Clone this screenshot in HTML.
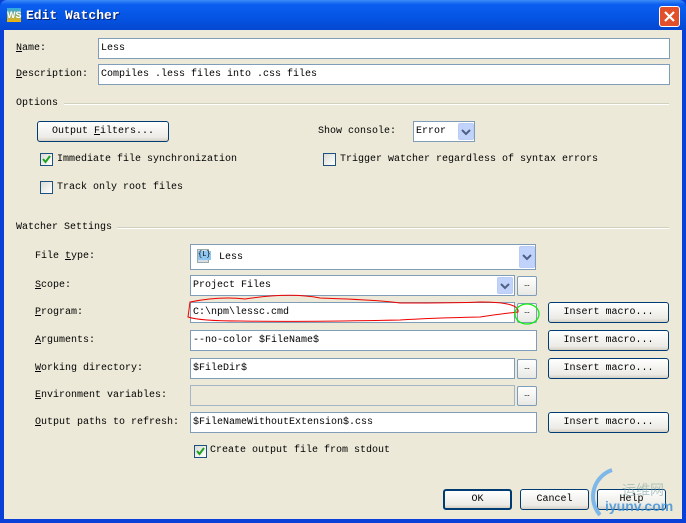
<!DOCTYPE html>
<html><head><meta charset="utf-8"><style>
*{box-sizing:border-box;margin:0;padding:0}
body{width:686px;height:523px;overflow:hidden;background:#0a3fd8;font-family:"Liberation Mono",monospace;font-size:10px;color:#000;position:relative}
.tb{position:absolute;left:0;top:0;width:686px;height:30px;background:linear-gradient(#3d8cf7 0%,#0a5ef0 15%,#0554e3 60%,#0548d0 100%);border-radius:7px 7px 0 0}
.frame{position:absolute;left:4px;top:30px;width:678px;height:489px;background:#ece9d8}
.a{position:absolute;white-space:nowrap}
.inp{position:absolute;background:#fff;border:1px solid #7f9db9;height:21px;padding:0 0 0 2px;line-height:20px}
.btn{position:absolute;border:1px solid #003c74;border-radius:3px;background:linear-gradient(#fff,#ecebe6 80%,#d6d0c5);text-align:center;line-height:19px;height:21px}
.dots{position:absolute;width:20px;height:20px;border:1px solid #7f9db9;border-radius:2px;background:linear-gradient(#fff,#e8e8e4);text-align:center;font-size:9px;line-height:14px}
.dd{position:absolute;width:16px;background:#c1d3fb;border:1px solid #b9cdf7;border-radius:2px}
.cb{position:absolute;width:13px;height:13px;border:1px solid #1c5180;background:linear-gradient(135deg,#dcdcd5,#fff)}
.line{position:absolute;height:2px;border-top:1px solid #d0d0bf;border-bottom:1px solid #fff}
u{text-decoration:underline}
</style></head><body>
<div class="tb"></div>
<div class="a" style="left:7px;top:8px;width:14px;height:14px;background:linear-gradient(#2aa8e8,#f5b400);font:bold 9px 'Liberation Sans';color:#fff;line-height:14px;text-align:center">WS</div>
<div class="a" style="left:26px;top:8px;color:#fff;font-weight:bold;font-size:13px;text-shadow:1px 1px #0a1f6a">Edit Watcher</div>
<div class="a" style="left:659px;top:6px;width:21px;height:21px;background:#e1502a;border:1px solid #fff;border-radius:3px"><svg width="19" height="19"><path d="M5 5L14 14M14 5L5 14" stroke="#fff" stroke-width="2.2"/></svg></div>
<div class="frame"></div>

<div class="a" style="left:16px;top:43px"><u>N</u>ame:</div>
<div class="inp" style="left:98px;top:38px;width:572px">Less</div>
<div class="a" style="left:16px;top:69px"><u>D</u>escription:</div>
<div class="inp" style="left:98px;top:64px;width:572px">Compiles .less files into .css files</div>

<div class="a" style="left:16px;top:98px">Options</div>
<div class="line" style="left:64px;top:103px;width:605px"></div>
<div class="btn" style="left:37px;top:121px;width:132px">Output <u>F</u>ilters...</div>
<div class="a" style="left:318px;top:126px">Show console:</div>
<div class="inp" style="left:413px;top:121px;width:62px">Error</div>
<div class="dd" style="left:458px;top:123px;height:17px"><svg width="14" height="15"><path d="M3 6L7 10L11 6" stroke="#4d6185" stroke-width="2" fill="none"/></svg></div>

<div class="cb" style="left:40px;top:153px"><svg width="11" height="11"><path d="M2 5L4.5 8L9 2" stroke="#21a121" stroke-width="2" fill="none"/></svg></div>
<div class="a" style="left:57px;top:154px">Immediate file synchronization</div>
<div class="cb" style="left:323px;top:153px"></div>
<div class="a" style="left:340px;top:154px">Trigger watcher regardless of syntax errors</div>
<div class="cb" style="left:40px;top:181px"></div>
<div class="a" style="left:57px;top:182px">Track only root files</div>

<div class="a" style="left:16px;top:222px">Watcher Settings</div>
<div class="line" style="left:117px;top:227px;width:552px"></div>

<div class="a" style="left:35px;top:251px">File <u>t</u>ype:</div>
<div class="inp" style="left:190px;top:244px;width:346px;height:26px;line-height:25px;padding-left:28px">Less</div>
<div class="a" style="left:197px;top:249px;width:12px;height:14px;background:#d6dde6;border:1px solid #9aa"></div>
<div class="a" style="left:198px;top:251px;font-size:7px;background:#8fc7f0;line-height:9px">{L}</div>
<div class="dd" style="left:519px;top:246px;height:22px"><svg width="14" height="20"><path d="M3 8L7 12L11 8" stroke="#4d6185" stroke-width="2" fill="none"/></svg></div>

<div class="a" style="left:35px;top:280px"><u>S</u>cope:</div>
<div class="inp" style="left:190px;top:275px;width:325px">Project Files</div>
<div class="dd" style="left:497px;top:277px;height:17px"><svg width="14" height="15"><path d="M3 6L7 10L11 6" stroke="#4d6185" stroke-width="2" fill="none"/></svg></div>
<div class="dots" style="left:517px;top:276px">…</div>

<div class="a" style="left:35px;top:307px"><u>P</u>rogram:</div>
<div class="inp" style="left:190px;top:302px;width:325px">C:\npm\lessc.cmd</div>
<div class="dots" style="left:517px;top:303px">…</div>
<div class="btn" style="left:548px;top:302px;width:121px">Insert macro...</div>

<div class="a" style="left:35px;top:335px"><u>A</u>rguments:</div>
<div class="inp" style="left:190px;top:330px;width:347px">--no-color $FileName$</div>
<div class="btn" style="left:548px;top:330px;width:121px">Insert macro...</div>

<div class="a" style="left:35px;top:363px"><u>W</u>orking directory:</div>
<div class="inp" style="left:190px;top:358px;width:325px">$FileDir$</div>
<div class="dots" style="left:517px;top:359px">…</div>
<div class="btn" style="left:548px;top:358px;width:121px">Insert macro...</div>

<div class="a" style="left:35px;top:390px"><u>E</u>nvironment variables:</div>
<div class="inp" style="left:190px;top:385px;width:325px;background:#ece9d8;border-color:#a5b5c8"></div>
<div class="dots" style="left:517px;top:386px">…</div>

<div class="a" style="left:35px;top:417px"><u>O</u>utput paths to refresh:</div>
<div class="inp" style="left:190px;top:412px;width:347px">$FileNameWithoutExtension$.css</div>
<div class="btn" style="left:548px;top:412px;width:121px">Insert macro...</div>

<div class="cb" style="left:194px;top:445px"><svg width="11" height="11"><path d="M2 5L4.5 8L9 2" stroke="#21a121" stroke-width="2" fill="none"/></svg></div>
<div class="a" style="left:210px;top:445px">Create output file from stdout</div>

<div class="btn" style="left:443px;top:489px;width:69px;border-width:2px;line-height:17px">OK</div>
<div class="btn" style="left:520px;top:489px;width:69px">Cancel</div>
<div class="btn" style="left:597px;top:489px;width:69px">Help</div>

<svg class="a" style="left:0;top:0" width="686" height="523">
<path d="M190 302 Q220 296 245 299 Q290 292 320 298 Q380 300 400 303 Q460 303 480 302 Q520 302 518 312 Q500 314 480 317 Q430 318 400 320 Q300 322 240 321 Q200 321 188 317 Z" fill="none" stroke="#e00" stroke-width="1"/>
<ellipse cx="527" cy="314" rx="12" ry="10" fill="none" stroke="#1e1" stroke-width="1.3"/>
<path d="M612 470 A28 28 0 0 0 600 515" fill="none" stroke="#7fb7e8" stroke-width="4"/>
</svg>
<div class="a" style="left:622px;top:480px;color:#8aa;font-family:'Liberation Sans','Noto Sans CJK SC',sans-serif;font-size:14px;opacity:.6">运维网</div>
<div class="a" style="left:605px;top:498px;color:#3a8fd8;font:bold 14px 'Liberation Sans',sans-serif;opacity:.8">iyunv.com</div>
</body></html>
